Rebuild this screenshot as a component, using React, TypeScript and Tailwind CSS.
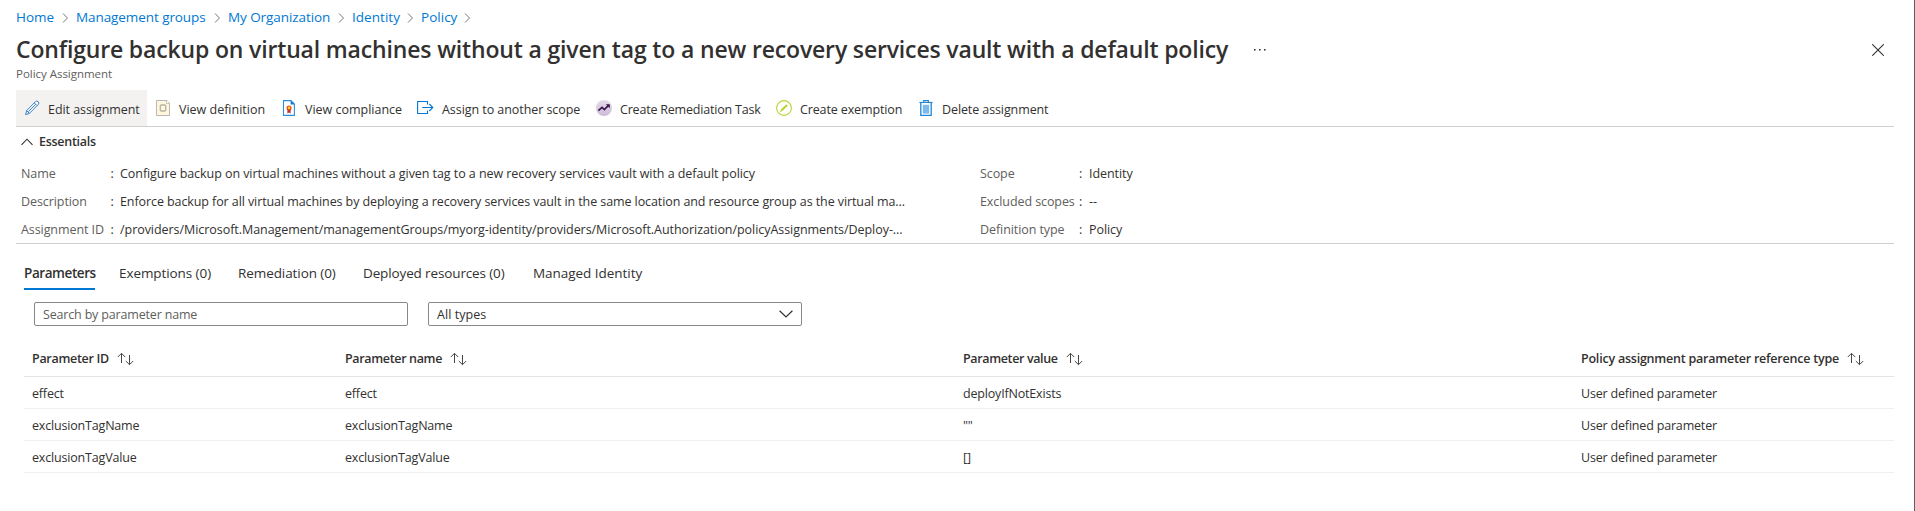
import type { ReactNode } from "react";

const crumbs = [
  { label: "Home", box: "w-[60px]", track: "tracking-[-0.04px]" },
  { label: "Management groups", box: "w-[152px]", track: "tracking-[-0.08px]" },
  { label: "My Organization", box: "w-[124px]", track: "tracking-[-0.08px]" },
  { label: "Identity", box: "w-[69px]", track: "tracking-[0.04px]" },
  { label: "Policy", box: "w-[57px]", track: "tracking-[0.02px]" },
];

const title =
  "Configure backup on virtual machines without a given tag to a new recovery services vault with a default policy";

function PencilIcon() {
  return (
    <svg width="16" height="16" viewBox="0 0 16 16" fill="none" stroke="#3a7fc4" strokeWidth="1">
      <path d="M1.6 14.6 2.7 10.6 11.4 1.7a1.9 1.9 0 0 1 2.8 2.8L5.4 13.4Z" fill="#fff" strokeLinejoin="round" />
      <path d="M2.7 10.6 5.4 13.4M10.3 2.9 13 5.6M4.4 11.6 11.6 4.4" />
    </svg>
  );
}

function DefinitionIcon() {
  return (
    <svg width="16" height="16" viewBox="0 0 16 16" fill="none">
      <path d="M1.5.5H12L14.5 3V15.5H1.5Z" fill="#fff6dc" stroke="#b9b8b4" />
      <path d="M11.5.5V3.5H14.5" fill="#fff" stroke="#b9b8b4" strokeWidth=".8" />
      <path d="M5.3 5.8 6.2 5H9.8L10.7 5.8V10.2L9.8 11H6.2L5.3 10.2Z" stroke="#b5b3a4" strokeWidth="1.3" />
    </svg>
  );
}

function ComplianceIcon() {
  return (
    <svg width="16" height="16" viewBox="0 0 16 16" fill="none">
      <path d="M2.5.6H10L13.4 4V15.4H2.5Z" fill="#fff" stroke="#2d8fdd" strokeWidth="1.1" />
      <path d="M9.6.4 13.8 4.6H9.6Z" fill="#1976c9" />
      <path d="M6.4 9H9.6V13.4L8 12.4 6.4 13.4Z" fill="#b52e31" />
      <circle cx="8" cy="7.9" r="2.5" fill="#e0401c" />
      <circle cx="8" cy="7.9" r="1.4" fill="#fcd116" />
    </svg>
  );
}

function AssignIcon() {
  return (
    <svg className="-ml-px" width="17" height="16" viewBox="0 0 17 16" fill="none" stroke="#0078d4" strokeWidth="1.1">
      <path d="M10.5 4.6V1.5H.6V13.5H10.5V10.6M5.2 7.5H15.6M12.3 4 15.8 7.5 12.3 11" />
    </svg>
  );
}

function RemediationIcon() {
  return (
    <svg width="16" height="16" viewBox="0 0 16 16" fill="none">
      <defs>
        <linearGradient id="lilac" x1="0" y1="0" x2="0" y2="1">
          <stop offset="0" stopColor="#e6dcec" />
          <stop offset="1" stopColor="#cdbbd6" />
        </linearGradient>
      </defs>
      <circle cx="8" cy="8" r="8" fill="url(#lilac)" />
      <path d="M2.4 10.6 6 7.4 8.4 9.6 12.4 5.4" stroke="#36184a" strokeWidth="1.7" />
      <path d="M9.8 4.2H13.8V8.2Z" fill="#36184a" />
    </svg>
  );
}

function ExemptionIcon() {
  return (
    <svg width="16" height="16" viewBox="0 0 16 16" fill="none" stroke="#b8d432">
      <circle cx="8" cy="8" r="7.4" strokeWidth="1.1" />
      <path d="M5.4 10.6 11 5" strokeWidth="2.1" />
      <path d="M4.3 11.8 5.6 10.4" strokeWidth="1.2" />
    </svg>
  );
}

function TrashIcon() {
  return (
    <svg width="16" height="16" viewBox="0 0 16 16" fill="none">
      <path d="M5.6 2V.6H10.4V2" stroke="#1f87d8" strokeWidth="1.1" />
      <path d="M1.4 2.5H14.6" stroke="#1f87d8" strokeWidth="1.2" />
      <path d="M2.8 3V15.4H13.2V3" fill="#fff" stroke="#1f87d8" strokeWidth="1.3" />
      <path d="M4.8 4.8H11.2V13.6H4.8Z" fill="#7db9ea" />
    </svg>
  );
}

function Sort() {
  return (
    <svg className="mt-[3px]" width="17" height="14" viewBox="0 0 17 14" fill="none" stroke="#484644" strokeWidth="1">
      <path d="M4.5 11V1.5M.8 5 4.5 1.3 8.2 5M12.5 3V12.5M8.8 9 12.5 12.7 16.2 9" />
    </svg>
  );
}

const commands: { label: string; icon: ReactNode; box: string; track: string }[] = [
  { label: "Edit assignment", icon: <PencilIcon />, box: "w-[131px] bg-[#f3f2f1]", track: "tracking-[-0.06px]" },
  { label: "View definition", icon: <DefinitionIcon />, box: "w-[126px]", track: "tracking-[-0.01px]" },
  { label: "View compliance", icon: <ComplianceIcon />, box: "w-[137px]", track: "tracking-[-0.01px]" },
  { label: "Assign to another scope", icon: <AssignIcon />, box: "w-[178px]", track: "tracking-[-0.06px]" },
  { label: "Create Remediation Task", icon: <RemediationIcon />, box: "w-[180px]", track: "tracking-[-0.2px]" },
  { label: "Create exemption", icon: <ExemptionIcon />, box: "w-[142px]", track: "tracking-[-0.13px]" },
  { label: "Delete assignment", icon: <TrashIcon />, box: "w-[145px]", track: "tracking-[-0.1px]" },
];

const leftFacts = [
  { label: "Name", value: title, track: "tracking-[-0.06px]" },
  {
    label: "Description",
    value:
      "Enforce backup for all virtual machines by deploying a recovery services vault in the same location and resource group as the virtual ma...",
    track: "tracking-[-0.09px]",
  },
  {
    label: "Assignment ID",
    value:
      "/providers/Microsoft.Management/managementGroups/myorg-identity/providers/Microsoft.Authorization/policyAssignments/Deploy-...",
    track: "tracking-[-0.05px]",
  },
];

const rightFacts = [
  { label: "Scope", value: "Identity", track: "tracking-[-0.06px]" },
  { label: "Excluded scopes", value: "--", track: "tracking-[-0.06px]" },
  { label: "Definition type", value: "Policy", track: "tracking-[-0.06px]" },
];

const tabs = [
  { label: "Exemptions (0)", box: "w-[119px]", track: "tracking-[-0.08px]" },
  { label: "Remediation (0)", box: "w-[125px]", track: "tracking-[-0.08px]" },
  { label: "Deployed resources (0)", box: "w-[170px]", track: "tracking-[-0.13px]" },
  { label: "Managed Identity", box: "w-[120px]", track: "tracking-[-0.04px]" },
];

const headers = [
  { label: "Parameter ID", track: "tracking-[-0.3px]" },
  { label: "Parameter name", track: "tracking-[-0.34px]" },
  { label: "Parameter value", track: "tracking-[-0.36px]" },
  { label: "Policy assignment parameter reference type", track: "tracking-[-0.22px]" },
];

const rows = [
  ["effect", "effect", "deployIfNotExists", "User defined parameter"],
  ["exclusionTagName", "exclusionTagName", '""', "User defined parameter"],
  ["exclusionTagValue", "exclusionTagValue", "[]", "User defined parameter"],
];

type Fact = { label: string; value: string; track: string };

function Facts({ items, labelBox, colonBox }: { items: Fact[]; labelBox: string; colonBox: string }) {
  return (
    <dl>
      {items.map((f) => (
        <div key={f.label} className="flex h-7 items-center whitespace-nowrap">
          <dt className={`${labelBox} shrink-0 tracking-[-0.08px] text-[#605e5c]`}>{f.label}</dt>
          <dd className="flex">
            <span className={colonBox}>:</span>
            <span className={f.track}>{f.value}</span>
          </dd>
        </div>
      ))}
    </dl>
  );
}

export default function App() {
  return (
    <div className="h-[511px] w-full overflow-hidden border-r border-[#605e5c] bg-white pl-4 pr-5 font-['Open_Sans','Noto_Sans',sans-serif] text-[12.5px] leading-5 text-[#323130]">
      <nav className="flex pt-[7px] text-[13.5px] text-[#0078d4]">
        {crumbs.map((c) => (
          <span key={c.label} className={`${c.box} flex items-center justify-between whitespace-nowrap pr-[7px]`}>
            <span className={c.track}>{c.label}</span>
            <svg className="mt-px shrink-0" width="7" height="10" viewBox="0 0 7 10" fill="none" stroke="#797775">
              <path d="M1 .5 5.5 5 1 9.5" />
            </svg>
          </span>
        ))}
      </nav>

      <header className="flex h-[37px] items-end">
        <h1 className="whitespace-nowrap text-[23px] font-semibold leading-[30px] tracking-[-0.16px]">{title}</h1>
        <svg className="mb-[13px] ml-[26px]" width="12" height="2" viewBox="0 0 12 2" fill="#323130">
          <path d="M0 0h1.6v1.4H0zM5 0h1.6v1.4H5zM10 0h1.6v1.4H10z" />
        </svg>
        <svg className="mb-2 ml-auto mr-2.5" width="12" height="12" viewBox="0 0 12 12" fill="none" stroke="#323130" strokeWidth="1.1">
          <path d="M.3.3 11.7 11.7M11.7.3 .3 11.7" />
        </svg>
      </header>
      <p className="pt-0.5 text-[11.5px] leading-4 tracking-[-0.03px] text-[#605e5c]">Policy Assignment</p>

      <div className="mt-2 flex h-[37px] border-b border-[#d2d0ce]">
        {commands.map((c) => (
          <button key={c.label} className={`${c.box} flex h-9 items-center gap-2 whitespace-nowrap pl-2`}>
            <span className="w-4 shrink-0">{c.icon}</span>
            <span className={`${c.track} pt-[3px]`}>{c.label}</span>
          </button>
        ))}
      </div>

      <section className="h-[117px] border-b border-[#d2d0ce] pl-[5px] pt-[5px]">
        <h2 className="flex items-center gap-1.5 font-semibold tracking-[-0.28px]">
          <svg width="12" height="8" viewBox="0 0 12 8" fill="none" stroke="#323130" strokeWidth="1.1">
            <path d="M.5 6.8 6 1.2 11.5 6.8" />
          </svg>
          Essentials
        </h2>
        <div className="grid grid-cols-[959px_1fr] pt-2">
          <Facts items={leftFacts} labelBox="w-[89.5px]" colonBox="w-[9.5px]" />
          <Facts items={rightFacts} labelBox="w-[99px]" colonBox="w-[10px]" />
        </div>
      </section>

      <div className="flex h-[46px] whitespace-nowrap pl-2 pt-[19px] text-[13.5px]">
        <div className="mr-6 h-[27px] w-[71px] border-b-2 border-[#0078d4] font-semibold tracking-[-0.42px]">Parameters</div>
        {tabs.map((t) => (
          <div key={t.label} className={`${t.box} ${t.track}`}>
            {t.label}
          </div>
        ))}
      </div>

      <div className="flex gap-5 pl-[18px] pt-3">
        <input
          className="h-6 w-[374px] rounded-[2px] border border-[#8a8886] px-2 pt-px tracking-[-0.17px] outline-none placeholder:text-[#605e5c]"
          placeholder="Search by parameter name"
        />
        <div className="flex h-6 w-[374px] items-center justify-between rounded-[2px] border border-[#8a8886] px-2 tracking-[0.06px]">
          <span className="pt-px">All types</span>
          <svg width="14" height="8" viewBox="0 0 14 8" fill="none" stroke="#323130" strokeWidth="1.2">
            <path d="M.6.7 7 7 13.4.7" />
          </svg>
        </div>
      </div>

      <div className="pl-2 pt-3">
        <div className="grid h-[39px] grid-cols-[313px_618px_618px_1fr] border-b border-[#e5e4e3] pt-[11px] font-semibold">
          {headers.map((h) => (
            <div key={h.label} className="flex gap-2 whitespace-nowrap pl-2">
              <span className={h.track}>{h.label}</span>
              <Sort />
            </div>
          ))}
        </div>
        {rows.map((r) => (
          <div key={r[0]} className="grid h-8 grid-cols-[313px_618px_618px_1fr] border-b border-[#f0efee] pt-[7px] tracking-[-0.18px]">
            {r.map((cell, i) => (
              <div key={i} className="pl-2">
                {cell}
              </div>
            ))}
          </div>
        ))}
      </div>
    </div>
  );
}
